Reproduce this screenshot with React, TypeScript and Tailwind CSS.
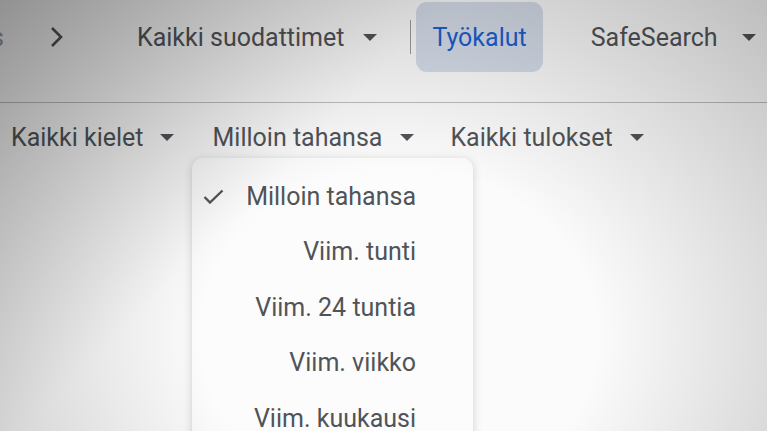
import React from "react";

function Caret() {
  return (
    <svg width="14" height="7" viewBox="0 0 14 7" className="shrink-0">
      <path d="M0 0 L14 0 L7 7 Z" fill="currentColor" />
    </svg>
  );
}

export default function App() {
  const items = ["Viim. tunti", "Viim. 24 tuntia", "Viim. viikko", "Viim. kuukausi"];
  return (
    <div className="relative w-[767px] h-[431px] overflow-hidden bg-[#fbfbfb] text-[#505458] font-['Roboto','Liberation_Sans',sans-serif] text-[25px] leading-none">
      {/* top row */}
      <div className="flex items-start h-[103px] border-b border-[#bdbdbd] pt-[2px]">
        <div className="flex items-center h-[70px] w-[50px] overflow-hidden">
          <span className="text-[#9a9a9a] -ml-[9px]">s</span>
        </div>
        <div className="flex items-center h-[70px]">
          <svg width="14" height="22" viewBox="0 0 14 22">
            <path d="M2 2 L11 11 L2 20" fill="none" stroke="currentColor" strokeWidth="2.6" />
          </svg>
        </div>
        <div className="flex items-center h-[70px] ml-[73px] gap-[19px]">
          <span>Kaikki suodattimet</span>
          <Caret />
        </div>
        <div className="flex items-center h-[70px] ml-[33px]">
          <div className="w-px h-[34px] bg-[#9c9c9c]" />
        </div>
        <div className="flex items-center h-[70px] ml-[5px] px-[16px] rounded-[11px] bg-[#d6dde9] text-[#1c5fd0]">
          Työkalut
        </div>
        <div className="flex items-center h-[70px] ml-[48px] gap-[24px]">
          <span>SafeSearch</span>
          <Caret />
        </div>
      </div>
      {/* second row */}
      <div className="flex items-center h-[60px] mt-[4px] pl-[11px]">
        <div className="flex items-center gap-[16px]">
          <span>Kaikki kielet</span>
          <Caret />
        </div>
        <div className="flex items-center gap-[18px] ml-[39px]">
          <span>Milloin tahansa</span>
          <Caret />
        </div>
        <div className="flex items-center gap-[17px] ml-[36px]">
          <span>Kaikki tulokset</span>
          <Caret />
        </div>
      </div>

      {/* dropdown menu */}
      <div className="absolute left-[192px] top-[158px] w-[281px] h-[300px] rounded-[11px] bg-[#fcfcfc] shadow-[0_2px_10px_rgba(0,0,0,0.18)] pr-[57px] pt-[23px]">
        <div className="flex items-center h-[30px] pl-[11px]">
          <svg width="21" height="15" viewBox="0 0 21 15" className="text-[#555]">
            <path d="M1.5 8 L7 13.5 L19.5 1.5" fill="none" stroke="currentColor" strokeWidth="2.4" />
          </svg>
          <span className="ml-auto">Milloin tahansa</span>
        </div>
        {items.map((t) => (
          <div key={t} className="flex items-center justify-end h-[30px] mt-[25.5px]">
            {t}
          </div>
        ))}
      </div>

      {/* vignette overlays */}
      <div className="pointer-events-none absolute inset-0 bg-[radial-gradient(ellipse_at_52%_78%,rgba(0,0,0,0)_35%,rgba(0,0,0,0.26)_100%)]" />
      <div className="pointer-events-none absolute inset-0 bg-[linear-gradient(135deg,rgba(0,0,0,0.22)_0%,rgba(0,0,0,0)_38%)]" />
    </div>
  );
}
